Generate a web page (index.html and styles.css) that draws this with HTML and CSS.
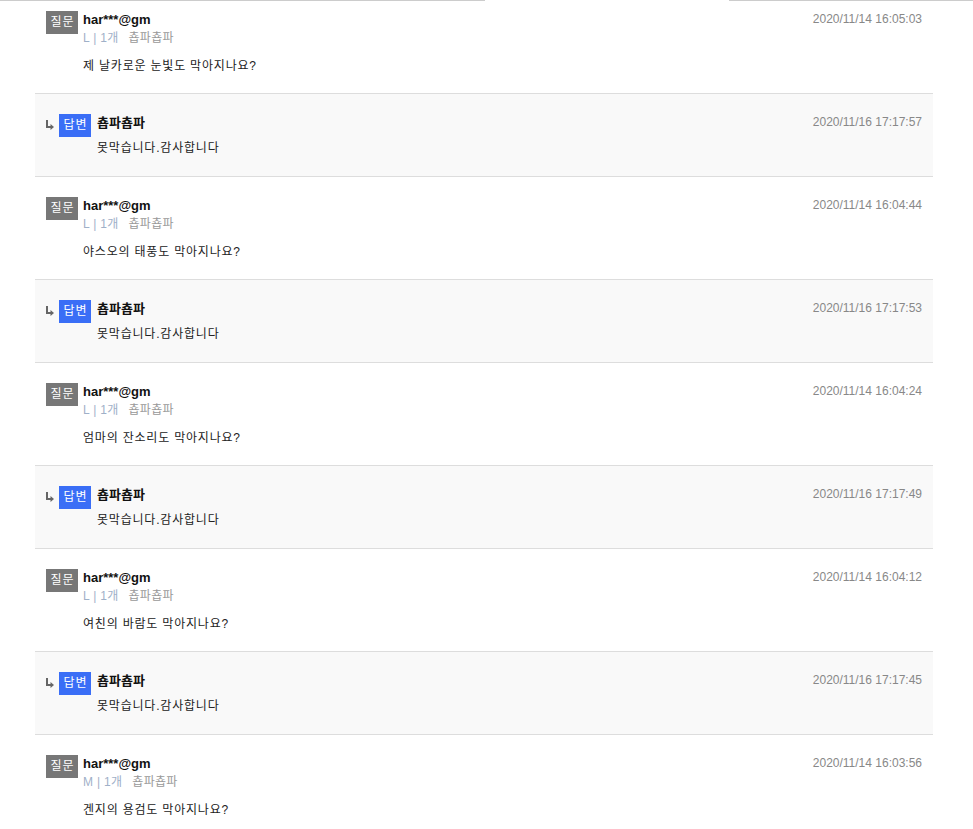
FILE: index.html
```html
<!DOCTYPE html>
<html lang="ko">
<head>
  <meta charset="UTF-8" />
  <title>Q&amp;A</title>
  <link rel="stylesheet" href="styles.css">
</head>
<body>
  <div class="tab-line">
    <span class="tab-line-left"></span>
    <span class="tab-line-gap"></span>
    <span class="tab-line-right"></span>
  </div>

  <ul class="qna-list">
    <li class="qna-item question first">
      <span class="badge badge-q">질문</span>
      <div class="qna-body">
        <div class="qna-name">har***@gm</div>
        <div class="qna-meta"><span class="opt">L | 1개</span><span class="prod">춉파춉파</span></div>
        <p class="qna-text">제 날카로운 눈빛도 막아지나요?</p>
      </div>
      <span class="qna-date">2020/11/14 16:05:03</span>
    </li>
    <li class="qna-item answer">
      <svg class="arrow" width="8" height="10" viewBox="0 0 8 10"><path d="M1 0V7H5" fill="none" stroke="#666" stroke-width="2"/><path d="M4.5 4L8 7L4.5 10Z" fill="#666"/></svg>
      <span class="badge badge-a">답변</span>
      <div class="qna-body">
        <div class="qna-name">춉파춉파</div>
        <p class="qna-text">못막습니다.감사합니다</p>
      </div>
      <span class="qna-date">2020/11/16 17:17:57</span>
    </li>

    <li class="qna-item question">
      <span class="badge badge-q">질문</span>
      <div class="qna-body">
        <div class="qna-name">har***@gm</div>
        <div class="qna-meta"><span class="opt">L | 1개</span><span class="prod">춉파춉파</span></div>
        <p class="qna-text">야스오의 태풍도 막아지나요?</p>
      </div>
      <span class="qna-date">2020/11/14 16:04:44</span>
    </li>
    <li class="qna-item answer">
      <svg class="arrow" width="8" height="10" viewBox="0 0 8 10"><path d="M1 0V7H5" fill="none" stroke="#666" stroke-width="2"/><path d="M4.5 4L8 7L4.5 10Z" fill="#666"/></svg>
      <span class="badge badge-a">답변</span>
      <div class="qna-body">
        <div class="qna-name">춉파춉파</div>
        <p class="qna-text">못막습니다.감사합니다</p>
      </div>
      <span class="qna-date">2020/11/16 17:17:53</span>
    </li>

    <li class="qna-item question">
      <span class="badge badge-q">질문</span>
      <div class="qna-body">
        <div class="qna-name">har***@gm</div>
        <div class="qna-meta"><span class="opt">L | 1개</span><span class="prod">춉파춉파</span></div>
        <p class="qna-text">엄마의 잔소리도 막아지나요?</p>
      </div>
      <span class="qna-date">2020/11/14 16:04:24</span>
    </li>
    <li class="qna-item answer">
      <svg class="arrow" width="8" height="10" viewBox="0 0 8 10"><path d="M1 0V7H5" fill="none" stroke="#666" stroke-width="2"/><path d="M4.5 4L8 7L4.5 10Z" fill="#666"/></svg>
      <span class="badge badge-a">답변</span>
      <div class="qna-body">
        <div class="qna-name">춉파춉파</div>
        <p class="qna-text">못막습니다.감사합니다</p>
      </div>
      <span class="qna-date">2020/11/16 17:17:49</span>
    </li>

    <li class="qna-item question">
      <span class="badge badge-q">질문</span>
      <div class="qna-body">
        <div class="qna-name">har***@gm</div>
        <div class="qna-meta"><span class="opt">L | 1개</span><span class="prod">춉파춉파</span></div>
        <p class="qna-text">여친의 바람도 막아지나요?</p>
      </div>
      <span class="qna-date">2020/11/14 16:04:12</span>
    </li>
    <li class="qna-item answer">
      <svg class="arrow" width="8" height="10" viewBox="0 0 8 10"><path d="M1 0V7H5" fill="none" stroke="#666" stroke-width="2"/><path d="M4.5 4L8 7L4.5 10Z" fill="#666"/></svg>
      <span class="badge badge-a">답변</span>
      <div class="qna-body">
        <div class="qna-name">춉파춉파</div>
        <p class="qna-text">못막습니다.감사합니다</p>
      </div>
      <span class="qna-date">2020/11/16 17:17:45</span>
    </li>

    <li class="qna-item question">
      <span class="badge badge-q">질문</span>
      <div class="qna-body">
        <div class="qna-name">har***@gm</div>
        <div class="qna-meta"><span class="opt">M | 1개</span><span class="prod">춉파춉파</span></div>
        <p class="qna-text">겐지의 용검도 막아지나요?</p>
      </div>
      <span class="qna-date">2020/11/14 16:03:56</span>
    </li>
  </ul>
</body>
</html>
```

FILE: styles.css
```css
/* Reset */
*, *::before, *::after {
  box-sizing: border-box;
}
body {
  margin: 0;
  background: #fff;
  color: #222;
  font-family: 'Liberation Sans', 'Noto Sans CJK KR', sans-serif;
  font-size: 12px;
}

/* tab bar bottom line */
.tab-line {
  display: flex;
  height: 1px;
}
.tab-line-left {
  width: 485px;
  border-top: 1px solid #ccc;
}
.tab-line-gap {
  width: 244px;
}
.tab-line-right {
  flex: 1;
  border-top: 1px solid #ccc;
}

.qna-list {
  list-style: none;
  margin: 0 0 0 35px;
  padding: 0;
  width: 898px;
}
.qna-item {
  display: flex;
  align-items: flex-start;
  padding: 20px 11px 19px 11px;
  border-bottom: 1px solid #ddd;
}
.qna-item.first {
  padding-top: 10px;
}
.qna-item.answer {
  background: #f9f9f9;
}

.badge {
  display: inline-block;
  width: 32px;
  height: 23px;
  line-height: 23px;
  text-align: center;
  color: #fff;
  font-size: 12px;
  letter-spacing: 1px;
  padding-left: 1px;
  margin-right: 5px;
  flex-shrink: 0;
}
.badge-q {
  background: #777;
}
.badge-a {
  background: #3a6ef6;
  margin-right: 6px;
}
.arrow {
  flex-shrink: 0;
  margin: 6px 5px 0 0;
}

.qna-body {
  flex: 1;
}
.qna-name {
  font-size: 13px;
  font-weight: bold;
  color: #111;
  line-height: 17px;
}
.qna-meta {
  line-height: 20px;
  color: #999;
  letter-spacing: 0.3px;
}
.qna-meta .opt {
  color: #9fb0c8;
  margin-right: 10px;
}
.qna-text {
  margin: 9px 0 0;
  line-height: 18px;
  color: #222;
  letter-spacing: 0.8px;
}
.answer .qna-text {
  margin-top: 8px;
}
.question {
  padding-bottom: 18px;
}
.qna-date {
  line-height: 17px;
  color: #888;
}
```
